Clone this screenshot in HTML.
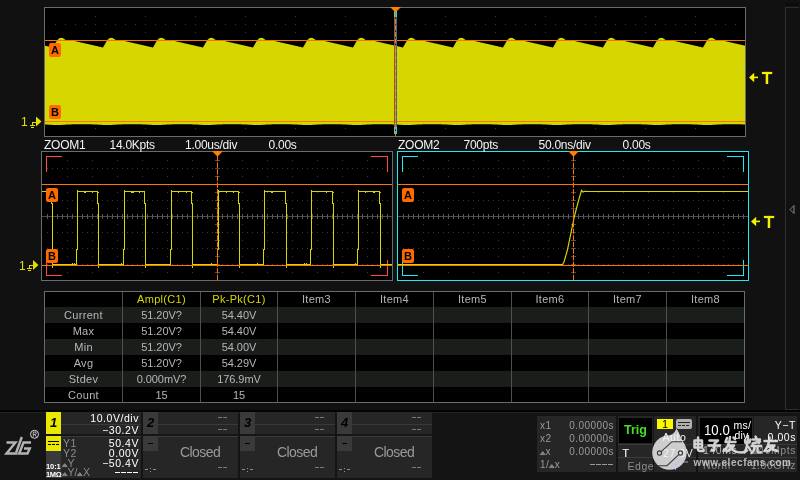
<!DOCTYPE html>
<html><head><meta charset="utf-8"><title>Scope</title>
<style>
html,body{margin:0;padding:0;}
body{width:800px;height:480px;background:#111111;overflow:hidden;position:relative;font-family:"Liberation Sans",sans-serif;}
#root{position:absolute;left:0;top:0;width:800px;height:480px;will-change:transform;}
.abs{position:absolute;}
.t12{position:absolute;font-size:12px;line-height:12px;color:#f4f4f4;white-space:nowrap;letter-spacing:-0.25px;}
.lab{position:absolute;width:12px;height:14px;background:#ff6a00;border-radius:2px;color:#000;font-size:11px;font-weight:bold;line-height:14px;text-align:center;}
svg{position:absolute;left:0;top:0;overflow:visible;}
.cell{position:absolute;font-size:11px;letter-spacing:0.3px;line-height:16px;height:16px;color:#b6b6b6;text-align:center;white-space:nowrap;}
.w{position:absolute;font-size:10.5px;line-height:10px;color:#fff;white-space:nowrap;letter-spacing:0.55px;}
.g{color:#8c8c8c;}
.x{font-size:10px;letter-spacing:0.45px;color:#9a9a9a;}
svg.tri{position:static;display:inline-block;vertical-align:0;overflow:visible;}
</style></head><body><div id="root">

<svg width="800" height="480" viewBox="0 0 800 480" shape-rendering="crispEdges">
<rect x="44.5" y="7.5" width="701" height="129" fill="#000" stroke="#6b6b6b" stroke-width="1"/>
<g stroke="#3c3c3c" stroke-width="1" fill="none"><path d="M95.5,16 V136" stroke-dasharray="1 7"/><path d="M145.5,16 V136" stroke-dasharray="1 7"/><path d="M195.5,16 V136" stroke-dasharray="1 7"/><path d="M245.5,16 V136" stroke-dasharray="1 7"/><path d="M295.5,16 V136" stroke-dasharray="1 7"/><path d="M345.5,16 V136" stroke-dasharray="1 7"/><path d="M395.5,16 V136" stroke-dasharray="1 7"/><path d="M445.5,16 V136" stroke-dasharray="1 7"/><path d="M495.5,16 V136" stroke-dasharray="1 7"/><path d="M545.5,16 V136" stroke-dasharray="1 7"/><path d="M595.5,16 V136" stroke-dasharray="1 7"/><path d="M645.5,16 V136" stroke-dasharray="1 7"/><path d="M695.5,16 V136" stroke-dasharray="1 7"/><path d="M55,24.5 H745" stroke-dasharray="1 9"/><path d="M55,40.5 H745" stroke-dasharray="1 9"/><path d="M55,56.5 H745" stroke-dasharray="1 9"/><path d="M55,72.5 H745" stroke-dasharray="1 9"/><path d="M55,88.5 H745" stroke-dasharray="1 9"/><path d="M55,104.5 H745" stroke-dasharray="1 9"/><path d="M55,120.5 H745" stroke-dasharray="1 9"/></g>
<path d="M45,45.7 L45.5,45.8 L46,45.9 L46.5,46.0 L47,46.1 L47.5,46.2 L48,46.4 L48.5,46.5 L49,46.6 L49.5,46.7 L50,46.8 L50.5,46.9 L51,47.0 L51.5,47.2 L52,47.3 L52.5,47.4 L53,47.5 L53.5,46.6 L54,45.8 L54.5,44.9 L55,44.0 L55.5,43.1 L56,42.2 L56.5,41.4 L57,40.5 L57.5,40.0 L58,39.5 L58.5,39.0 L59,38.6 L59.5,38.3 L60,38.0 L60.5,37.9 L61,37.8 L61.5,37.8 L62,37.9 L62.5,38.1 L63,38.3 L63.5,38.5 L64,38.8 L64.5,39.2 L65,39.5 L65.5,39.9 L66,40.3 L66.5,40.3 L67,40.4 L67.5,40.4 L68,40.5 L68.5,40.5 L69,40.6 L69.5,40.6 L70,40.7 L70.5,40.7 L71,40.7 L71.5,40.8 L72,40.8 L72.5,40.9 L73,40.9 L73.5,41.0 L74,41.0 L74.5,41.1 L75,41.1 L75.5,41.2 L76,41.3 L76.5,41.4 L77,41.6 L77.5,41.7 L78,41.8 L78.5,41.9 L79,42.0 L79.5,42.1 L80,42.2 L80.5,42.4 L81,42.5 L81.5,42.6 L82,42.7 L82.5,42.8 L83,42.9 L83.5,43.0 L84,43.2 L84.5,43.3 L85,43.4 L85.5,43.5 L86,43.6 L86.5,43.7 L87,43.8 L87.5,44.0 L88,44.1 L88.5,44.2 L89,44.3 L89.5,44.4 L90,44.5 L90.5,44.6 L91,44.8 L91.5,44.9 L92,45.0 L92.5,45.1 L93,45.2 L93.5,45.3 L94,45.4 L94.5,45.6 L95,45.7 L95.5,45.8 L96,45.9 L96.5,46.0 L97,46.1 L97.5,46.2 L98,46.4 L98.5,46.5 L99,46.6 L99.5,46.7 L100,46.8 L100.5,46.9 L101,47.0 L101.5,47.2 L102,47.3 L102.5,47.4 L103,47.5 L103.5,46.6 L104,45.8 L104.5,44.9 L105,44.0 L105.5,43.1 L106,42.2 L106.5,41.4 L107,40.5 L107.5,40.0 L108,39.5 L108.5,39.0 L109,38.6 L109.5,38.3 L110,38.0 L110.5,37.9 L111,37.8 L111.5,37.8 L112,37.9 L112.5,38.1 L113,38.3 L113.5,38.5 L114,38.8 L114.5,39.2 L115,39.5 L115.5,39.9 L116,40.3 L116.5,40.3 L117,40.4 L117.5,40.4 L118,40.5 L118.5,40.5 L119,40.6 L119.5,40.6 L120,40.7 L120.5,40.7 L121,40.7 L121.5,40.8 L122,40.8 L122.5,40.9 L123,40.9 L123.5,41.0 L124,41.0 L124.5,41.1 L125,41.1 L125.5,41.2 L126,41.3 L126.5,41.4 L127,41.6 L127.5,41.7 L128,41.8 L128.5,41.9 L129,42.0 L129.5,42.1 L130,42.2 L130.5,42.4 L131,42.5 L131.5,42.6 L132,42.7 L132.5,42.8 L133,42.9 L133.5,43.0 L134,43.2 L134.5,43.3 L135,43.4 L135.5,43.5 L136,43.6 L136.5,43.7 L137,43.8 L137.5,44.0 L138,44.1 L138.5,44.2 L139,44.3 L139.5,44.4 L140,44.5 L140.5,44.6 L141,44.8 L141.5,44.9 L142,45.0 L142.5,45.1 L143,45.2 L143.5,45.3 L144,45.4 L144.5,45.6 L145,45.7 L145.5,45.8 L146,45.9 L146.5,46.0 L147,46.1 L147.5,46.2 L148,46.4 L148.5,46.5 L149,46.6 L149.5,46.7 L150,46.8 L150.5,46.9 L151,47.0 L151.5,47.2 L152,47.3 L152.5,47.4 L153,47.5 L153.5,46.6 L154,45.8 L154.5,44.9 L155,44.0 L155.5,43.1 L156,42.2 L156.5,41.4 L157,40.5 L157.5,40.0 L158,39.5 L158.5,39.0 L159,38.6 L159.5,38.3 L160,38.0 L160.5,37.9 L161,37.8 L161.5,37.8 L162,37.9 L162.5,38.1 L163,38.3 L163.5,38.5 L164,38.8 L164.5,39.2 L165,39.5 L165.5,39.9 L166,40.3 L166.5,40.3 L167,40.4 L167.5,40.4 L168,40.5 L168.5,40.5 L169,40.6 L169.5,40.6 L170,40.7 L170.5,40.7 L171,40.7 L171.5,40.8 L172,40.8 L172.5,40.9 L173,40.9 L173.5,41.0 L174,41.0 L174.5,41.1 L175,41.1 L175.5,41.2 L176,41.3 L176.5,41.4 L177,41.6 L177.5,41.7 L178,41.8 L178.5,41.9 L179,42.0 L179.5,42.1 L180,42.2 L180.5,42.4 L181,42.5 L181.5,42.6 L182,42.7 L182.5,42.8 L183,42.9 L183.5,43.0 L184,43.2 L184.5,43.3 L185,43.4 L185.5,43.5 L186,43.6 L186.5,43.7 L187,43.8 L187.5,44.0 L188,44.1 L188.5,44.2 L189,44.3 L189.5,44.4 L190,44.5 L190.5,44.6 L191,44.8 L191.5,44.9 L192,45.0 L192.5,45.1 L193,45.2 L193.5,45.3 L194,45.4 L194.5,45.6 L195,45.7 L195.5,45.8 L196,45.9 L196.5,46.0 L197,46.1 L197.5,46.2 L198,46.4 L198.5,46.5 L199,46.6 L199.5,46.7 L200,46.8 L200.5,46.9 L201,47.0 L201.5,47.2 L202,47.3 L202.5,47.4 L203,47.5 L203.5,46.6 L204,45.8 L204.5,44.9 L205,44.0 L205.5,43.1 L206,42.2 L206.5,41.4 L207,40.5 L207.5,40.0 L208,39.5 L208.5,39.0 L209,38.6 L209.5,38.3 L210,38.0 L210.5,37.9 L211,37.8 L211.5,37.8 L212,37.9 L212.5,38.1 L213,38.3 L213.5,38.5 L214,38.8 L214.5,39.2 L215,39.5 L215.5,39.9 L216,40.3 L216.5,40.3 L217,40.4 L217.5,40.4 L218,40.5 L218.5,40.5 L219,40.6 L219.5,40.6 L220,40.7 L220.5,40.7 L221,40.7 L221.5,40.8 L222,40.8 L222.5,40.9 L223,40.9 L223.5,41.0 L224,41.0 L224.5,41.1 L225,41.1 L225.5,41.2 L226,41.3 L226.5,41.4 L227,41.6 L227.5,41.7 L228,41.8 L228.5,41.9 L229,42.0 L229.5,42.1 L230,42.2 L230.5,42.4 L231,42.5 L231.5,42.6 L232,42.7 L232.5,42.8 L233,42.9 L233.5,43.0 L234,43.2 L234.5,43.3 L235,43.4 L235.5,43.5 L236,43.6 L236.5,43.7 L237,43.8 L237.5,44.0 L238,44.1 L238.5,44.2 L239,44.3 L239.5,44.4 L240,44.5 L240.5,44.6 L241,44.8 L241.5,44.9 L242,45.0 L242.5,45.1 L243,45.2 L243.5,45.3 L244,45.4 L244.5,45.6 L245,45.7 L245.5,45.8 L246,45.9 L246.5,46.0 L247,46.1 L247.5,46.2 L248,46.4 L248.5,46.5 L249,46.6 L249.5,46.7 L250,46.8 L250.5,46.9 L251,47.0 L251.5,47.2 L252,47.3 L252.5,47.4 L253,47.5 L253.5,46.6 L254,45.8 L254.5,44.9 L255,44.0 L255.5,43.1 L256,42.2 L256.5,41.4 L257,40.5 L257.5,40.0 L258,39.5 L258.5,39.0 L259,38.6 L259.5,38.3 L260,38.0 L260.5,37.9 L261,37.8 L261.5,37.8 L262,37.9 L262.5,38.1 L263,38.3 L263.5,38.5 L264,38.8 L264.5,39.2 L265,39.5 L265.5,39.9 L266,40.3 L266.5,40.3 L267,40.4 L267.5,40.4 L268,40.5 L268.5,40.5 L269,40.6 L269.5,40.6 L270,40.7 L270.5,40.7 L271,40.7 L271.5,40.8 L272,40.8 L272.5,40.9 L273,40.9 L273.5,41.0 L274,41.0 L274.5,41.1 L275,41.1 L275.5,41.2 L276,41.3 L276.5,41.4 L277,41.6 L277.5,41.7 L278,41.8 L278.5,41.9 L279,42.0 L279.5,42.1 L280,42.2 L280.5,42.4 L281,42.5 L281.5,42.6 L282,42.7 L282.5,42.8 L283,42.9 L283.5,43.0 L284,43.2 L284.5,43.3 L285,43.4 L285.5,43.5 L286,43.6 L286.5,43.7 L287,43.8 L287.5,44.0 L288,44.1 L288.5,44.2 L289,44.3 L289.5,44.4 L290,44.5 L290.5,44.6 L291,44.8 L291.5,44.9 L292,45.0 L292.5,45.1 L293,45.2 L293.5,45.3 L294,45.4 L294.5,45.6 L295,45.7 L295.5,45.8 L296,45.9 L296.5,46.0 L297,46.1 L297.5,46.2 L298,46.4 L298.5,46.5 L299,46.6 L299.5,46.7 L300,46.8 L300.5,46.9 L301,47.0 L301.5,47.2 L302,47.3 L302.5,47.4 L303,47.5 L303.5,46.6 L304,45.8 L304.5,44.9 L305,44.0 L305.5,43.1 L306,42.2 L306.5,41.4 L307,40.5 L307.5,40.0 L308,39.5 L308.5,39.0 L309,38.6 L309.5,38.3 L310,38.0 L310.5,37.9 L311,37.8 L311.5,37.8 L312,37.9 L312.5,38.1 L313,38.3 L313.5,38.5 L314,38.8 L314.5,39.2 L315,39.5 L315.5,39.9 L316,40.3 L316.5,40.3 L317,40.4 L317.5,40.4 L318,40.5 L318.5,40.5 L319,40.6 L319.5,40.6 L320,40.7 L320.5,40.7 L321,40.7 L321.5,40.8 L322,40.8 L322.5,40.9 L323,40.9 L323.5,41.0 L324,41.0 L324.5,41.1 L325,41.1 L325.5,41.2 L326,41.3 L326.5,41.4 L327,41.6 L327.5,41.7 L328,41.8 L328.5,41.9 L329,42.0 L329.5,42.1 L330,42.2 L330.5,42.4 L331,42.5 L331.5,42.6 L332,42.7 L332.5,42.8 L333,42.9 L333.5,43.0 L334,43.2 L334.5,43.3 L335,43.4 L335.5,43.5 L336,43.6 L336.5,43.7 L337,43.8 L337.5,44.0 L338,44.1 L338.5,44.2 L339,44.3 L339.5,44.4 L340,44.5 L340.5,44.6 L341,44.8 L341.5,44.9 L342,45.0 L342.5,45.1 L343,45.2 L343.5,45.3 L344,45.4 L344.5,45.6 L345,45.7 L345.5,45.8 L346,45.9 L346.5,46.0 L347,46.1 L347.5,46.2 L348,46.4 L348.5,46.5 L349,46.6 L349.5,46.7 L350,46.8 L350.5,46.9 L351,47.0 L351.5,47.2 L352,47.3 L352.5,47.4 L353,47.5 L353.5,46.6 L354,45.8 L354.5,44.9 L355,44.0 L355.5,43.1 L356,42.2 L356.5,41.4 L357,40.5 L357.5,40.0 L358,39.5 L358.5,39.0 L359,38.6 L359.5,38.3 L360,38.0 L360.5,37.9 L361,37.8 L361.5,37.8 L362,37.9 L362.5,38.1 L363,38.3 L363.5,38.5 L364,38.8 L364.5,39.2 L365,39.5 L365.5,39.9 L366,40.3 L366.5,40.3 L367,40.4 L367.5,40.4 L368,40.5 L368.5,40.5 L369,40.6 L369.5,40.6 L370,40.7 L370.5,40.7 L371,40.7 L371.5,40.8 L372,40.8 L372.5,40.9 L373,40.9 L373.5,41.0 L374,41.0 L374.5,41.1 L375,41.1 L375.5,41.2 L376,41.3 L376.5,41.4 L377,41.6 L377.5,41.7 L378,41.8 L378.5,41.9 L379,42.0 L379.5,42.1 L380,42.2 L380.5,42.4 L381,42.5 L381.5,42.6 L382,42.7 L382.5,42.8 L383,42.9 L383.5,43.0 L384,43.2 L384.5,43.3 L385,43.4 L385.5,43.5 L386,43.6 L386.5,43.7 L387,43.8 L387.5,44.0 L388,44.1 L388.5,44.2 L389,44.3 L389.5,44.4 L390,44.5 L390.5,44.6 L391,44.8 L391.5,44.9 L392,45.0 L392.5,45.1 L393,45.2 L393.5,45.3 L394,45.4 L394.5,45.6 L395,45.7 L395.5,45.8 L396,45.9 L396.5,46.0 L397,46.1 L397.5,46.2 L398,46.4 L398.5,46.5 L399,46.6 L399.5,46.7 L400,46.8 L400.5,46.9 L401,47.0 L401.5,47.2 L402,47.3 L402.5,47.4 L403,47.5 L403.5,46.6 L404,45.8 L404.5,44.9 L405,44.0 L405.5,43.1 L406,42.2 L406.5,41.4 L407,40.5 L407.5,40.0 L408,39.5 L408.5,39.0 L409,38.6 L409.5,38.3 L410,38.0 L410.5,37.9 L411,37.8 L411.5,37.8 L412,37.9 L412.5,38.1 L413,38.3 L413.5,38.5 L414,38.8 L414.5,39.2 L415,39.5 L415.5,39.9 L416,40.3 L416.5,40.3 L417,40.4 L417.5,40.4 L418,40.5 L418.5,40.5 L419,40.6 L419.5,40.6 L420,40.7 L420.5,40.7 L421,40.7 L421.5,40.8 L422,40.8 L422.5,40.9 L423,40.9 L423.5,41.0 L424,41.0 L424.5,41.1 L425,41.1 L425.5,41.2 L426,41.3 L426.5,41.4 L427,41.6 L427.5,41.7 L428,41.8 L428.5,41.9 L429,42.0 L429.5,42.1 L430,42.2 L430.5,42.4 L431,42.5 L431.5,42.6 L432,42.7 L432.5,42.8 L433,42.9 L433.5,43.0 L434,43.2 L434.5,43.3 L435,43.4 L435.5,43.5 L436,43.6 L436.5,43.7 L437,43.8 L437.5,44.0 L438,44.1 L438.5,44.2 L439,44.3 L439.5,44.4 L440,44.5 L440.5,44.6 L441,44.8 L441.5,44.9 L442,45.0 L442.5,45.1 L443,45.2 L443.5,45.3 L444,45.4 L444.5,45.6 L445,45.7 L445.5,45.8 L446,45.9 L446.5,46.0 L447,46.1 L447.5,46.2 L448,46.4 L448.5,46.5 L449,46.6 L449.5,46.7 L450,46.8 L450.5,46.9 L451,47.0 L451.5,47.2 L452,47.3 L452.5,47.4 L453,47.5 L453.5,46.6 L454,45.8 L454.5,44.9 L455,44.0 L455.5,43.1 L456,42.2 L456.5,41.4 L457,40.5 L457.5,40.0 L458,39.5 L458.5,39.0 L459,38.6 L459.5,38.3 L460,38.0 L460.5,37.9 L461,37.8 L461.5,37.8 L462,37.9 L462.5,38.1 L463,38.3 L463.5,38.5 L464,38.8 L464.5,39.2 L465,39.5 L465.5,39.9 L466,40.3 L466.5,40.3 L467,40.4 L467.5,40.4 L468,40.5 L468.5,40.5 L469,40.6 L469.5,40.6 L470,40.7 L470.5,40.7 L471,40.7 L471.5,40.8 L472,40.8 L472.5,40.9 L473,40.9 L473.5,41.0 L474,41.0 L474.5,41.1 L475,41.1 L475.5,41.2 L476,41.3 L476.5,41.4 L477,41.6 L477.5,41.7 L478,41.8 L478.5,41.9 L479,42.0 L479.5,42.1 L480,42.2 L480.5,42.4 L481,42.5 L481.5,42.6 L482,42.7 L482.5,42.8 L483,42.9 L483.5,43.0 L484,43.2 L484.5,43.3 L485,43.4 L485.5,43.5 L486,43.6 L486.5,43.7 L487,43.8 L487.5,44.0 L488,44.1 L488.5,44.2 L489,44.3 L489.5,44.4 L490,44.5 L490.5,44.6 L491,44.8 L491.5,44.9 L492,45.0 L492.5,45.1 L493,45.2 L493.5,45.3 L494,45.4 L494.5,45.6 L495,45.7 L495.5,45.8 L496,45.9 L496.5,46.0 L497,46.1 L497.5,46.2 L498,46.4 L498.5,46.5 L499,46.6 L499.5,46.7 L500,46.8 L500.5,46.9 L501,47.0 L501.5,47.2 L502,47.3 L502.5,47.4 L503,47.5 L503.5,46.6 L504,45.8 L504.5,44.9 L505,44.0 L505.5,43.1 L506,42.2 L506.5,41.4 L507,40.5 L507.5,40.0 L508,39.5 L508.5,39.0 L509,38.6 L509.5,38.3 L510,38.0 L510.5,37.9 L511,37.8 L511.5,37.8 L512,37.9 L512.5,38.1 L513,38.3 L513.5,38.5 L514,38.8 L514.5,39.2 L515,39.5 L515.5,39.9 L516,40.3 L516.5,40.3 L517,40.4 L517.5,40.4 L518,40.5 L518.5,40.5 L519,40.6 L519.5,40.6 L520,40.7 L520.5,40.7 L521,40.7 L521.5,40.8 L522,40.8 L522.5,40.9 L523,40.9 L523.5,41.0 L524,41.0 L524.5,41.1 L525,41.1 L525.5,41.2 L526,41.3 L526.5,41.4 L527,41.6 L527.5,41.7 L528,41.8 L528.5,41.9 L529,42.0 L529.5,42.1 L530,42.2 L530.5,42.4 L531,42.5 L531.5,42.6 L532,42.7 L532.5,42.8 L533,42.9 L533.5,43.0 L534,43.2 L534.5,43.3 L535,43.4 L535.5,43.5 L536,43.6 L536.5,43.7 L537,43.8 L537.5,44.0 L538,44.1 L538.5,44.2 L539,44.3 L539.5,44.4 L540,44.5 L540.5,44.6 L541,44.8 L541.5,44.9 L542,45.0 L542.5,45.1 L543,45.2 L543.5,45.3 L544,45.4 L544.5,45.6 L545,45.7 L545.5,45.8 L546,45.9 L546.5,46.0 L547,46.1 L547.5,46.2 L548,46.4 L548.5,46.5 L549,46.6 L549.5,46.7 L550,46.8 L550.5,46.9 L551,47.0 L551.5,47.2 L552,47.3 L552.5,47.4 L553,47.5 L553.5,46.6 L554,45.8 L554.5,44.9 L555,44.0 L555.5,43.1 L556,42.2 L556.5,41.4 L557,40.5 L557.5,40.0 L558,39.5 L558.5,39.0 L559,38.6 L559.5,38.3 L560,38.0 L560.5,37.9 L561,37.8 L561.5,37.8 L562,37.9 L562.5,38.1 L563,38.3 L563.5,38.5 L564,38.8 L564.5,39.2 L565,39.5 L565.5,39.9 L566,40.3 L566.5,40.3 L567,40.4 L567.5,40.4 L568,40.5 L568.5,40.5 L569,40.6 L569.5,40.6 L570,40.7 L570.5,40.7 L571,40.7 L571.5,40.8 L572,40.8 L572.5,40.9 L573,40.9 L573.5,41.0 L574,41.0 L574.5,41.1 L575,41.1 L575.5,41.2 L576,41.3 L576.5,41.4 L577,41.6 L577.5,41.7 L578,41.8 L578.5,41.9 L579,42.0 L579.5,42.1 L580,42.2 L580.5,42.4 L581,42.5 L581.5,42.6 L582,42.7 L582.5,42.8 L583,42.9 L583.5,43.0 L584,43.2 L584.5,43.3 L585,43.4 L585.5,43.5 L586,43.6 L586.5,43.7 L587,43.8 L587.5,44.0 L588,44.1 L588.5,44.2 L589,44.3 L589.5,44.4 L590,44.5 L590.5,44.6 L591,44.8 L591.5,44.9 L592,45.0 L592.5,45.1 L593,45.2 L593.5,45.3 L594,45.4 L594.5,45.6 L595,45.7 L595.5,45.8 L596,45.9 L596.5,46.0 L597,46.1 L597.5,46.2 L598,46.4 L598.5,46.5 L599,46.6 L599.5,46.7 L600,46.8 L600.5,46.9 L601,47.0 L601.5,47.2 L602,47.3 L602.5,47.4 L603,47.5 L603.5,46.6 L604,45.8 L604.5,44.9 L605,44.0 L605.5,43.1 L606,42.2 L606.5,41.4 L607,40.5 L607.5,40.0 L608,39.5 L608.5,39.0 L609,38.6 L609.5,38.3 L610,38.0 L610.5,37.9 L611,37.8 L611.5,37.8 L612,37.9 L612.5,38.1 L613,38.3 L613.5,38.5 L614,38.8 L614.5,39.2 L615,39.5 L615.5,39.9 L616,40.3 L616.5,40.3 L617,40.4 L617.5,40.4 L618,40.5 L618.5,40.5 L619,40.6 L619.5,40.6 L620,40.7 L620.5,40.7 L621,40.7 L621.5,40.8 L622,40.8 L622.5,40.9 L623,40.9 L623.5,41.0 L624,41.0 L624.5,41.1 L625,41.1 L625.5,41.2 L626,41.3 L626.5,41.4 L627,41.6 L627.5,41.7 L628,41.8 L628.5,41.9 L629,42.0 L629.5,42.1 L630,42.2 L630.5,42.4 L631,42.5 L631.5,42.6 L632,42.7 L632.5,42.8 L633,42.9 L633.5,43.0 L634,43.2 L634.5,43.3 L635,43.4 L635.5,43.5 L636,43.6 L636.5,43.7 L637,43.8 L637.5,44.0 L638,44.1 L638.5,44.2 L639,44.3 L639.5,44.4 L640,44.5 L640.5,44.6 L641,44.8 L641.5,44.9 L642,45.0 L642.5,45.1 L643,45.2 L643.5,45.3 L644,45.4 L644.5,45.6 L645,45.7 L645.5,45.8 L646,45.9 L646.5,46.0 L647,46.1 L647.5,46.2 L648,46.4 L648.5,46.5 L649,46.6 L649.5,46.7 L650,46.8 L650.5,46.9 L651,47.0 L651.5,47.2 L652,47.3 L652.5,47.4 L653,47.5 L653.5,46.6 L654,45.8 L654.5,44.9 L655,44.0 L655.5,43.1 L656,42.2 L656.5,41.4 L657,40.5 L657.5,40.0 L658,39.5 L658.5,39.0 L659,38.6 L659.5,38.3 L660,38.0 L660.5,37.9 L661,37.8 L661.5,37.8 L662,37.9 L662.5,38.1 L663,38.3 L663.5,38.5 L664,38.8 L664.5,39.2 L665,39.5 L665.5,39.9 L666,40.3 L666.5,40.3 L667,40.4 L667.5,40.4 L668,40.5 L668.5,40.5 L669,40.6 L669.5,40.6 L670,40.7 L670.5,40.7 L671,40.7 L671.5,40.8 L672,40.8 L672.5,40.9 L673,40.9 L673.5,41.0 L674,41.0 L674.5,41.1 L675,41.1 L675.5,41.2 L676,41.3 L676.5,41.4 L677,41.6 L677.5,41.7 L678,41.8 L678.5,41.9 L679,42.0 L679.5,42.1 L680,42.2 L680.5,42.4 L681,42.5 L681.5,42.6 L682,42.7 L682.5,42.8 L683,42.9 L683.5,43.0 L684,43.2 L684.5,43.3 L685,43.4 L685.5,43.5 L686,43.6 L686.5,43.7 L687,43.8 L687.5,44.0 L688,44.1 L688.5,44.2 L689,44.3 L689.5,44.4 L690,44.5 L690.5,44.6 L691,44.8 L691.5,44.9 L692,45.0 L692.5,45.1 L693,45.2 L693.5,45.3 L694,45.4 L694.5,45.6 L695,45.7 L695.5,45.8 L696,45.9 L696.5,46.0 L697,46.1 L697.5,46.2 L698,46.4 L698.5,46.5 L699,46.6 L699.5,46.7 L700,46.8 L700.5,46.9 L701,47.0 L701.5,47.2 L702,47.3 L702.5,47.4 L703,47.5 L703.5,46.6 L704,45.8 L704.5,44.9 L705,44.0 L705.5,43.1 L706,42.2 L706.5,41.4 L707,40.5 L707.5,40.0 L708,39.5 L708.5,39.0 L709,38.6 L709.5,38.3 L710,38.0 L710.5,37.9 L711,37.8 L711.5,37.8 L712,37.9 L712.5,38.1 L713,38.3 L713.5,38.5 L714,38.8 L714.5,39.2 L715,39.5 L715.5,39.9 L716,40.3 L716.5,40.3 L717,40.4 L717.5,40.4 L718,40.5 L718.5,40.5 L719,40.6 L719.5,40.6 L720,40.7 L720.5,40.7 L721,40.7 L721.5,40.8 L722,40.8 L722.5,40.9 L723,40.9 L723.5,41.0 L724,41.0 L724.5,41.1 L725,41.1 L725.5,41.2 L726,41.3 L726.5,41.4 L727,41.6 L727.5,41.7 L728,41.8 L728.5,41.9 L729,42.0 L729.5,42.1 L730,42.2 L730.5,42.4 L731,42.5 L731.5,42.6 L732,42.7 L732.5,42.8 L733,42.9 L733.5,43.0 L734,43.2 L734.5,43.3 L735,43.4 L735.5,43.5 L736,43.6 L736.5,43.7 L737,43.8 L737.5,44.0 L738,44.1 L738.5,44.2 L739,44.3 L739.5,44.4 L740,44.5 L740.5,44.6 L741,44.8 L741.5,44.9 L742,45.0 L742.5,45.1 L743,45.2 L743.5,45.3 L744,45.4 L744.5,45.6 L745,45.7 L745,124.4 L743,124.4 L741,124.3 L739,124.3 L737,124.3 L735,124.3 L733,124.3 L731,124.3 L729,124.3 L727,124.3 L725,124.3 L723,124.3 L721,124.4 L719,124.4 L717,124.5 L715,124.7 L713,124.8 L711,125.0 L709,125.1 L707,125.1 L705,125.1 L703,125.0 L701,124.8 L699,124.7 L697,124.5 L695,124.4 L693,124.4 L691,124.3 L689,124.3 L687,124.3 L685,124.3 L683,124.3 L681,124.3 L679,124.3 L677,124.3 L675,124.3 L673,124.3 L671,124.4 L669,124.4 L667,124.5 L665,124.7 L663,124.8 L661,125.0 L659,125.1 L657,125.1 L655,125.1 L653,125.0 L651,124.8 L649,124.7 L647,124.5 L645,124.4 L643,124.4 L641,124.3 L639,124.3 L637,124.3 L635,124.3 L633,124.3 L631,124.3 L629,124.3 L627,124.3 L625,124.3 L623,124.3 L621,124.4 L619,124.4 L617,124.5 L615,124.7 L613,124.8 L611,125.0 L609,125.1 L607,125.1 L605,125.1 L603,125.0 L601,124.8 L599,124.7 L597,124.5 L595,124.4 L593,124.4 L591,124.3 L589,124.3 L587,124.3 L585,124.3 L583,124.3 L581,124.3 L579,124.3 L577,124.3 L575,124.3 L573,124.3 L571,124.4 L569,124.4 L567,124.5 L565,124.7 L563,124.8 L561,125.0 L559,125.1 L557,125.1 L555,125.1 L553,125.0 L551,124.8 L549,124.7 L547,124.5 L545,124.4 L543,124.4 L541,124.3 L539,124.3 L537,124.3 L535,124.3 L533,124.3 L531,124.3 L529,124.3 L527,124.3 L525,124.3 L523,124.3 L521,124.4 L519,124.4 L517,124.5 L515,124.7 L513,124.8 L511,125.0 L509,125.1 L507,125.1 L505,125.1 L503,125.0 L501,124.8 L499,124.7 L497,124.5 L495,124.4 L493,124.4 L491,124.3 L489,124.3 L487,124.3 L485,124.3 L483,124.3 L481,124.3 L479,124.3 L477,124.3 L475,124.3 L473,124.3 L471,124.4 L469,124.4 L467,124.5 L465,124.7 L463,124.8 L461,125.0 L459,125.1 L457,125.1 L455,125.1 L453,125.0 L451,124.8 L449,124.7 L447,124.5 L445,124.4 L443,124.4 L441,124.3 L439,124.3 L437,124.3 L435,124.3 L433,124.3 L431,124.3 L429,124.3 L427,124.3 L425,124.3 L423,124.3 L421,124.4 L419,124.4 L417,124.5 L415,124.7 L413,124.8 L411,125.0 L409,125.1 L407,125.1 L405,125.1 L403,125.0 L401,124.8 L399,124.7 L397,124.5 L395,124.4 L393,124.4 L391,124.3 L389,124.3 L387,124.3 L385,124.3 L383,124.3 L381,124.3 L379,124.3 L377,124.3 L375,124.3 L373,124.3 L371,124.4 L369,124.4 L367,124.5 L365,124.7 L363,124.8 L361,125.0 L359,125.1 L357,125.1 L355,125.1 L353,125.0 L351,124.8 L349,124.7 L347,124.5 L345,124.4 L343,124.4 L341,124.3 L339,124.3 L337,124.3 L335,124.3 L333,124.3 L331,124.3 L329,124.3 L327,124.3 L325,124.3 L323,124.3 L321,124.4 L319,124.4 L317,124.5 L315,124.7 L313,124.8 L311,125.0 L309,125.1 L307,125.1 L305,125.1 L303,125.0 L301,124.8 L299,124.7 L297,124.5 L295,124.4 L293,124.4 L291,124.3 L289,124.3 L287,124.3 L285,124.3 L283,124.3 L281,124.3 L279,124.3 L277,124.3 L275,124.3 L273,124.3 L271,124.4 L269,124.4 L267,124.5 L265,124.7 L263,124.8 L261,125.0 L259,125.1 L257,125.1 L255,125.1 L253,125.0 L251,124.8 L249,124.7 L247,124.5 L245,124.4 L243,124.4 L241,124.3 L239,124.3 L237,124.3 L235,124.3 L233,124.3 L231,124.3 L229,124.3 L227,124.3 L225,124.3 L223,124.3 L221,124.4 L219,124.4 L217,124.5 L215,124.7 L213,124.8 L211,125.0 L209,125.1 L207,125.1 L205,125.1 L203,125.0 L201,124.8 L199,124.7 L197,124.5 L195,124.4 L193,124.4 L191,124.3 L189,124.3 L187,124.3 L185,124.3 L183,124.3 L181,124.3 L179,124.3 L177,124.3 L175,124.3 L173,124.3 L171,124.4 L169,124.4 L167,124.5 L165,124.7 L163,124.8 L161,125.0 L159,125.1 L157,125.1 L155,125.1 L153,125.0 L151,124.8 L149,124.7 L147,124.5 L145,124.4 L143,124.4 L141,124.3 L139,124.3 L137,124.3 L135,124.3 L133,124.3 L131,124.3 L129,124.3 L127,124.3 L125,124.3 L123,124.3 L121,124.4 L119,124.4 L117,124.5 L115,124.7 L113,124.8 L111,125.0 L109,125.1 L107,125.1 L105,125.1 L103,125.0 L101,124.8 L99,124.7 L97,124.5 L95,124.4 L93,124.4 L91,124.3 L89,124.3 L87,124.3 L85,124.3 L83,124.3 L81,124.3 L79,124.3 L77,124.3 L75,124.3 L73,124.3 L71,124.4 L69,124.4 L67,124.5 L65,124.7 L63,124.8 L61,125.0 L59,125.1 L57,125.1 L55,125.1 L53,125.0 L51,124.8 L49,124.7 L47,124.5 L45,124.4 Z" fill="#d6d600" shape-rendering="geometricPrecision"/>
<rect x="45" y="40" width="700" height="1" fill="#ff7400"/>
<rect x="45" y="121" width="700" height="1" fill="#ff7400"/>
<rect x="394" y="17" width="1" height="110" fill="#5d6475"/>
<rect x="396" y="17" width="1" height="110" fill="#5d6475"/>
<rect x="394" y="10" width="1" height="7" fill="#20e0e8"/><rect x="396" y="10" width="1" height="7" fill="#20e0e8"/>
<rect x="394" y="127" width="1" height="7" fill="#20e0e8"/><rect x="396" y="127" width="1" height="7" fill="#20e0e8"/><rect x="394" y="133" width="3" height="1" fill="#20e0e8"/>
<path d="M395.5,12 V137" stroke="#ff7400" stroke-dasharray="5.3 1.3" fill="none" shape-rendering="geometricPrecision"/>
<path d="M390,7 L401,7 L395.5,12.5 Z" fill="#ff8000" shape-rendering="geometricPrecision"/>
<rect x="41.5" y="151.5" width="351" height="129" fill="#000" stroke="#6b6b6b" stroke-width="1"/>
<g stroke="#3a3a3a" stroke-width="1" fill="none"><path d="M67.5,160 V280" stroke-dasharray="1 7"/><path d="M92.5,160 V280" stroke-dasharray="1 7"/><path d="M117.5,160 V280" stroke-dasharray="1 7"/><path d="M142.5,160 V280" stroke-dasharray="1 7"/><path d="M167.5,160 V280" stroke-dasharray="1 7"/><path d="M192.5,160 V280" stroke-dasharray="1 7"/><path d="M217.5,160 V280" stroke-dasharray="1 7"/><path d="M242.5,160 V280" stroke-dasharray="1 7"/><path d="M267.5,160 V280" stroke-dasharray="1 7"/><path d="M292.5,160 V280" stroke-dasharray="1 7"/><path d="M317.5,160 V280" stroke-dasharray="1 7"/><path d="M342.5,160 V280" stroke-dasharray="1 7"/><path d="M367.5,160 V280" stroke-dasharray="1 7"/><path d="M47,168.5 H392" stroke-dasharray="1 4"/><path d="M47,184.5 H392" stroke-dasharray="1 4"/><path d="M47,200.5 H392" stroke-dasharray="1 4"/><path d="M47,232.5 H392" stroke-dasharray="1 4"/><path d="M47,248.5 H392" stroke-dasharray="1 4"/><path d="M47,264.5 H392" stroke-dasharray="1 4"/></g>
<path d="M217.5,160 V280" stroke="#4a4a4a" stroke-width="5" stroke-dasharray="1 7" fill="none"/>
<rect x="42" y="216" width="350" height="1" fill="#4a4a4a"/>
<path d="M47,216.5 H392" stroke="#5a5a5a" stroke-width="5" stroke-dasharray="1 4" fill="none"/>
<path d="M46.5,172 V156.5 H62" fill="none" stroke="#ff4848"/>
<path d="M371,156.5 H387.5 V172" fill="none" stroke="#ff4848"/>
<path d="M46.5,260 V275.5 H62" fill="none" stroke="#ff4848"/>
<path d="M371,275.5 H387.5 V260" fill="none" stroke="#ff4848"/>
<rect x="397.5" y="151.5" width="351" height="129" fill="#000" stroke="#20e8f0" stroke-width="1"/>
<g stroke="#3a3a3a" stroke-width="1" fill="none"><path d="M423.5,160 V280" stroke-dasharray="1 7"/><path d="M448.5,160 V280" stroke-dasharray="1 7"/><path d="M473.5,160 V280" stroke-dasharray="1 7"/><path d="M498.5,160 V280" stroke-dasharray="1 7"/><path d="M523.5,160 V280" stroke-dasharray="1 7"/><path d="M548.5,160 V280" stroke-dasharray="1 7"/><path d="M573.5,160 V280" stroke-dasharray="1 7"/><path d="M598.5,160 V280" stroke-dasharray="1 7"/><path d="M623.5,160 V280" stroke-dasharray="1 7"/><path d="M648.5,160 V280" stroke-dasharray="1 7"/><path d="M673.5,160 V280" stroke-dasharray="1 7"/><path d="M698.5,160 V280" stroke-dasharray="1 7"/><path d="M723.5,160 V280" stroke-dasharray="1 7"/><path d="M403,168.5 H748" stroke-dasharray="1 4"/><path d="M403,184.5 H748" stroke-dasharray="1 4"/><path d="M403,200.5 H748" stroke-dasharray="1 4"/><path d="M403,232.5 H748" stroke-dasharray="1 4"/><path d="M403,248.5 H748" stroke-dasharray="1 4"/><path d="M403,264.5 H748" stroke-dasharray="1 4"/></g>
<path d="M573.5,160 V280" stroke="#4a4a4a" stroke-width="5" stroke-dasharray="1 7" fill="none"/>
<rect x="398" y="216" width="350" height="1" fill="#4a4a4a"/>
<path d="M403,216.5 H748" stroke="#5a5a5a" stroke-width="5" stroke-dasharray="1 4" fill="none"/>
<path d="M402.5,172 V156.5 H418" fill="none" stroke="#20e8f0"/>
<path d="M727,156.5 H743.5 V172" fill="none" stroke="#20e8f0"/>
<path d="M402.5,260 V275.5 H418" fill="none" stroke="#20e8f0"/>
<path d="M727,275.5 H743.5 V260" fill="none" stroke="#20e8f0"/>
<g fill="#d6d600"><rect x="42" y="191" width="10" height="1"/><rect x="51" y="191" width="1" height="13"/><rect x="52" y="203" width="1" height="65"/><rect x="52" y="264" width="25" height="1"/><rect x="76" y="249" width="1" height="16"/><rect x="77" y="190" width="1" height="60"/><rect x="77" y="191" width="21" height="1"/><rect x="97" y="191" width="1" height="13"/><rect x="98" y="203" width="1" height="65"/><rect x="98" y="264" width="26" height="1"/><rect x="123" y="249" width="1" height="16"/><rect x="124" y="190" width="1" height="60"/><rect x="124" y="191" width="21" height="1"/><rect x="144" y="191" width="1" height="13"/><rect x="145" y="203" width="1" height="65"/><rect x="145" y="264" width="26" height="1"/><rect x="170" y="249" width="1" height="16"/><rect x="171" y="190" width="1" height="60"/><rect x="171" y="191" width="21" height="1"/><rect x="191" y="191" width="1" height="13"/><rect x="192" y="203" width="1" height="65"/><rect x="192" y="264" width="26" height="1"/><rect x="217" y="249" width="1" height="16"/><rect x="218" y="190" width="1" height="60"/><rect x="218" y="191" width="21" height="1"/><rect x="238" y="191" width="1" height="13"/><rect x="239" y="203" width="1" height="65"/><rect x="239" y="264" width="25" height="1"/><rect x="263" y="249" width="1" height="16"/><rect x="264" y="190" width="1" height="60"/><rect x="264" y="191" width="22" height="1"/><rect x="285" y="191" width="1" height="13"/><rect x="286" y="203" width="1" height="65"/><rect x="286" y="264" width="25" height="1"/><rect x="310" y="249" width="1" height="16"/><rect x="311" y="190" width="1" height="60"/><rect x="311" y="191" width="22" height="1"/><rect x="332" y="191" width="1" height="13"/><rect x="333" y="203" width="1" height="65"/><rect x="333" y="264" width="25" height="1"/><rect x="357" y="249" width="1" height="16"/><rect x="358" y="190" width="1" height="60"/><rect x="358" y="191" width="22" height="1"/><rect x="379" y="191" width="1" height="13"/><rect x="380" y="203" width="1" height="65"/><rect x="380" y="264" width="12" height="1"/><rect x="84" y="192" width="1" height="1"/><rect x="85" y="192" width="1" height="1"/><rect x="92" y="192" width="1" height="1"/><rect x="98" y="192" width="1" height="1"/><rect x="72" y="263" width="1" height="1"/><rect x="74" y="263" width="1" height="1"/><rect x="131" y="192" width="1" height="1"/><rect x="132" y="192" width="2" height="1"/><rect x="139" y="192" width="1" height="1"/><rect x="121" y="263" width="1" height="1"/><rect x="178" y="192" width="1" height="1"/><rect x="186" y="192" width="1" height="1"/><rect x="192" y="192" width="1" height="1"/><rect x="226" y="192" width="1" height="1"/><rect x="233" y="192" width="1" height="1"/><rect x="239" y="192" width="1" height="1"/><rect x="211" y="263" width="1" height="1"/><rect x="271" y="192" width="2" height="1"/><rect x="272" y="192" width="1" height="1"/><rect x="257" y="263" width="1" height="1"/><rect x="326" y="192" width="1" height="1"/><rect x="332" y="192" width="2" height="1"/><rect x="304" y="263" width="1" height="1"/><rect x="306" y="263" width="1" height="1"/><rect x="365" y="192" width="1" height="1"/><rect x="373" y="192" width="2" height="1"/><rect x="379" y="192" width="2" height="1"/><rect x="355" y="263" width="1" height="1"/></g>
<rect x="42" y="184" width="350" height="1" fill="#ff7400"/>
<rect x="42" y="265" width="350" height="1" fill="#ff7400"/>
<rect x="398" y="184" width="350" height="1" fill="#ff7400"/>
<rect x="398" y="265" width="350" height="1" fill="#ff7400"/>
<path d="M398,264.5 L562.5,264.5 L564,262 L567.4,250 L574.5,216 L578.7,200 L581.5,190.3 L583,192 L585,191.3 L588,191.5 L748,191.5" fill="none" stroke="#d6d600" stroke-width="1.15" shape-rendering="geometricPrecision"/>
<path d="M217.5,156 V281" stroke="#ff7400" stroke-dasharray="5.3 1.3" fill="none" shape-rendering="geometricPrecision"/>
<path d="M212,151 L223,151 L217.5,156.8 Z" fill="#ff8000" shape-rendering="geometricPrecision"/>
<path d="M573.5,156 V281" stroke="#ff7400" stroke-dasharray="5.3 1.3" fill="none" shape-rendering="geometricPrecision"/>
<path d="M568,151 L579,151 L573.5,156.8 Z" fill="#ff8000" shape-rendering="geometricPrecision"/>
<path d="M749,77.5 L754.2,72.8 L754.2,82.2 Z" fill="#f2f200" shape-rendering="geometricPrecision"/>
<rect x="754" y="76.6" width="4" height="1.6" fill="#f2f200" shape-rendering="geometricPrecision"/>
<rect x="761.9" y="71.9" width="10.3" height="2.2" fill="#f2f200" shape-rendering="geometricPrecision"/>
<rect x="765.7" y="71.9" width="2.5" height="12.1" fill="#f2f200" shape-rendering="geometricPrecision"/>
<path d="M751,221.5 L756.2,216.8 L756.2,226.2 Z" fill="#f2f200" shape-rendering="geometricPrecision"/>
<rect x="756" y="220.6" width="4" height="1.6" fill="#f2f200" shape-rendering="geometricPrecision"/>
<rect x="763.9" y="215.9" width="10.3" height="2.2" fill="#f2f200" shape-rendering="geometricPrecision"/>
<rect x="767.7" y="215.9" width="2.5" height="12.1" fill="#f2f200" shape-rendering="geometricPrecision"/>
<path d="M36,116.5 L41.5,121.5 L36,126.5 Z" fill="#e0e000" shape-rendering="geometricPrecision"/>
<path d="M36,122.0 H32.5 V125.0 M29.5,125.0 H35 M30.5,127.0 H34" fill="none" stroke="#e0e000" stroke-width="1"/>
<path d="M33,260 L38.5,265 L33,270 Z" fill="#e0e000" shape-rendering="geometricPrecision"/>
<path d="M33,265.5 H29.5 V268.5 M26.5,268.5 H32 M27.5,270.5 H31" fill="none" stroke="#e0e000" stroke-width="1"/>
<path d="M799,7.5 H785.5 V409.5 H799" fill="none" stroke="#2e2e2e"/>
<rect x="785" y="3" width="14" height="3" fill="#0c0c0c"/>
<path d="M790,209.5 L794,205.5 V213.5 Z" fill="none" stroke="#8a8a8a" stroke-width="1" shape-rendering="geometricPrecision"/>
</svg>
<div class="lab" style="left:49px;top:43px;">A</div><div class="lab" style="left:49px;top:105px;">B</div>
<div class="lab" style="left:46px;top:188px;">A</div><div class="lab" style="left:46px;top:249px;">B</div>
<div class="lab" style="left:402px;top:188px;">A</div><div class="lab" style="left:402px;top:249px;">B</div>
<div class="abs" style="left:21px;top:116px;font-size:12px;line-height:12px;color:#e0e000;">1</div>
<div class="abs" style="left:19px;top:259.5px;font-size:12px;line-height:12px;color:#e0e000;">1</div>
<div class="t12" style="left:44px;top:138.5px;">ZOOM1</div>
<div class="t12" style="left:109.5px;top:138.5px;">14.0Kpts</div>
<div class="t12" style="left:185px;top:138.5px;">1.00us/div</div>
<div class="t12" style="left:268.5px;top:138.5px;">0.00s</div>
<div class="t12" style="left:398px;top:138.5px;">ZOOM2</div>
<div class="t12" style="left:463.5px;top:138.5px;">700pts</div>
<div class="t12" style="left:538.5px;top:138.5px;">50.0ns/div</div>
<div class="t12" style="left:622.5px;top:138.5px;">0.00s</div>
<div class="abs" style="left:44px;top:291px;width:701px;height:112px;box-sizing:border-box;border:1px solid #6b6b6b;background:#000;"></div>
<div class="abs" style="left:45px;top:307px;width:699px;height:16px;background:#191e1b;"></div>
<div class="abs" style="left:45px;top:339px;width:699px;height:16px;background:#191e1b;"></div>
<div class="abs" style="left:45px;top:371px;width:699px;height:16px;background:#191e1b;"></div>
<div class="abs" style="left:122px;top:292px;width:1px;height:110px;background:#4e4e4e;"></div>
<div class="abs" style="left:200px;top:292px;width:1px;height:110px;background:#4e4e4e;"></div>
<div class="abs" style="left:277px;top:292px;width:1px;height:110px;background:#4e4e4e;"></div>
<div class="abs" style="left:355px;top:292px;width:1px;height:110px;background:#4e4e4e;"></div>
<div class="abs" style="left:433px;top:292px;width:1px;height:110px;background:#4e4e4e;"></div>
<div class="abs" style="left:511px;top:292px;width:1px;height:110px;background:#4e4e4e;"></div>
<div class="abs" style="left:588px;top:292px;width:1px;height:110px;background:#4e4e4e;"></div>
<div class="abs" style="left:666px;top:292px;width:1px;height:110px;background:#4e4e4e;"></div>
<div class="cell" style="left:123px;top:291px;width:77px;color:#d6d600;">Ampl(C1)</div>
<div class="cell" style="left:201px;top:291px;width:76px;color:#d6d600;">Pk-Pk(C1)</div>
<div class="cell" style="left:278px;top:291px;width:77px;color:#b6b6b6;">Item3</div>
<div class="cell" style="left:356px;top:291px;width:77px;color:#b6b6b6;">Item4</div>
<div class="cell" style="left:434px;top:291px;width:77px;color:#b6b6b6;">Item5</div>
<div class="cell" style="left:512px;top:291px;width:76px;color:#b6b6b6;">Item6</div>
<div class="cell" style="left:589px;top:291px;width:77px;color:#b6b6b6;">Item7</div>
<div class="cell" style="left:667px;top:291px;width:77px;color:#b6b6b6;">Item8</div>
<div class="cell" style="left:45px;top:307px;width:77px;">Current</div>
<div class="cell" style="left:123px;top:307px;width:77px;letter-spacing:-0.05px;">51.20V?</div>
<div class="cell" style="left:201px;top:307px;width:76px;letter-spacing:-0.05px;">54.40V</div>
<div class="cell" style="left:45px;top:323px;width:77px;">Max</div>
<div class="cell" style="left:123px;top:323px;width:77px;letter-spacing:-0.05px;">51.20V?</div>
<div class="cell" style="left:201px;top:323px;width:76px;letter-spacing:-0.05px;">54.40V</div>
<div class="cell" style="left:45px;top:339px;width:77px;">Min</div>
<div class="cell" style="left:123px;top:339px;width:77px;letter-spacing:-0.05px;">51.20V?</div>
<div class="cell" style="left:201px;top:339px;width:76px;letter-spacing:-0.05px;">54.00V</div>
<div class="cell" style="left:45px;top:355px;width:77px;">Avg</div>
<div class="cell" style="left:123px;top:355px;width:77px;letter-spacing:-0.05px;">51.20V?</div>
<div class="cell" style="left:201px;top:355px;width:76px;letter-spacing:-0.05px;">54.29V</div>
<div class="cell" style="left:45px;top:371px;width:77px;">Stdev</div>
<div class="cell" style="left:123px;top:371px;width:77px;letter-spacing:-0.05px;">0.000mV?</div>
<div class="cell" style="left:201px;top:371px;width:76px;letter-spacing:-0.05px;">176.9mV</div>
<div class="cell" style="left:45px;top:387px;width:77px;">Count</div>
<div class="cell" style="left:123px;top:387px;width:77px;letter-spacing:-0.05px;">15</div>
<div class="cell" style="left:201px;top:387px;width:76px;letter-spacing:-0.05px;">15</div>
<div class="abs" style="left:0;top:410px;width:800px;height:2px;background:#030303;"></div>
<div class="abs" style="left:0;top:412px;width:800px;height:68px;background:#141414;"></div>
<div class="abs" style="left:0;top:412px;width:800px;height:1px;background:#222226;"></div>
<div class="abs" style="left:46px;top:412px;width:95px;height:66px;background:#262626;"></div>
<div class="abs" style="left:46px;top:412px;width:15px;height:22px;background:#e8e800;color:#000;font-weight:bold;font-style:italic;font-size:13px;line-height:22px;text-align:center;">1</div>
<div class="abs" style="left:46px;top:436px;width:15px;height:15px;background:#e8e800;"></div>
<div class="abs" style="left:48px;top:441px;width:11px;height:1px;background:#000;"></div>
<div class="abs" style="left:48px;top:444px;width:11px;height:1px;background:repeating-linear-gradient(90deg,#000 0 3px,transparent 3px 4px);"></div>
<div class="abs" style="left:46px;top:451px;width:15px;height:27px;background:#3a3a3a;"></div>
<div class="abs" style="left:61px;top:424px;width:80px;height:1px;background:#3a3a3a;"></div>
<div class="abs" style="left:46px;top:434px;width:95px;height:2px;background:#161616;"></div>
<div class="abs" style="left:61px;top:436px;width:80px;height:1px;background:#3a3a3a;"></div>
<div class="w" style="right:661px;top:413px;">10.0V/div</div>
<div class="w" style="right:661px;top:425px;">&minus;30.2V</div>
<div class="w g" style="left:63px;top:437.5px;">Y1</div>
<div class="w" style="right:661px;top:437.5px;">50.4V</div>
<div class="w g" style="left:63px;top:447.5px;">Y2</div>
<div class="w" style="right:661px;top:447.5px;">0.00V</div>
<div class="w g" style="left:62px;top:457.5px;"><svg class="tri" width="5.5" height="4" viewBox="0 0 5.5 4"><path d="M0.3,3.6 L2.75,0.6 L5.2,3.6 Z" fill="#7a7a7a" stroke="#a0a0a0" stroke-width="0.7"/></svg>Y</div>
<div class="w" style="right:661px;top:457.5px;">&minus;50.4V</div>
<div class="w g" style="left:62px;top:466.5px;letter-spacing:0;"><svg class="tri" width="5.5" height="4" viewBox="0 0 5.5 4"><path d="M0.3,3.6 L2.75,0.6 L5.2,3.6 Z" fill="#7a7a7a" stroke="#a0a0a0" stroke-width="0.7"/></svg>Y/<svg class="tri" width="5.5" height="4" viewBox="0 0 5.5 4"><path d="M0.3,3.6 L2.75,0.6 L5.2,3.6 Z" fill="#7a7a7a" stroke="#a0a0a0" stroke-width="0.7"/></svg>X</div>
<div class="abs" style="left:133.25px;top:471.8px;width:4.75px;height:1.5px;background:#fff;"></div><div class="abs" style="left:127.30px;top:471.8px;width:4.75px;height:1.5px;background:#fff;"></div><div class="abs" style="left:121.35px;top:471.8px;width:4.75px;height:1.5px;background:#fff;"></div><div class="abs" style="left:115.40px;top:471.8px;width:4.75px;height:1.5px;background:#fff;"></div>
<div class="w" style="left:46px;top:462px;font-size:7.5px;letter-spacing:-0.1px;font-weight:bold;">10:1</div>
<div class="w" style="left:46px;top:470px;font-size:7.5px;letter-spacing:-0.3px;font-weight:bold;">1M&#937;</div>
<div class="abs" style="left:143px;top:412px;width:95px;height:66px;background:#262626;"></div>
<div class="abs" style="left:143px;top:412px;width:15px;height:22px;background:#3a3a3a;color:#000;font-weight:bold;font-style:italic;font-size:13px;line-height:22px;text-align:center;">2</div>
<div class="abs" style="left:143px;top:436px;width:15px;height:15px;background:#3a3a3a;"></div>
<div class="abs" style="left:148px;top:443px;width:5px;height:1px;background:#000;"></div>
<div class="abs" style="left:158px;top:424px;width:80px;height:1px;background:#3a3a3a;"></div>
<div class="abs" style="left:143px;top:434px;width:95px;height:2px;background:#161616;"></div>
<div class="abs" style="left:158px;top:436px;width:80px;height:1px;background:#3a3a3a;"></div>
<div class="abs" style="left:180px;top:443.5px;font-size:14px;letter-spacing:-0.55px;line-height:16px;color:#9a9a9a;">Closed</div>
<div class="abs" style="left:218px;top:417px;width:3.5px;height:1px;background:#7a7a7a;"></div><div class="abs" style="left:223px;top:417px;width:3.5px;height:1px;background:#7a7a7a;"></div>
<div class="abs" style="left:218px;top:429px;width:3.5px;height:1px;background:#7a7a7a;"></div><div class="abs" style="left:223px;top:429px;width:3.5px;height:1px;background:#7a7a7a;"></div>
<div class="abs" style="left:218px;top:467px;width:3.5px;height:1px;background:#7a7a7a;"></div><div class="abs" style="left:223px;top:467px;width:3.5px;height:1px;background:#7a7a7a;"></div>
<div class="abs" style="left:145px;top:469px;width:3px;height:1px;background:#8c8c8c;"></div><div class="abs" style="left:153px;top:469px;width:3px;height:1px;background:#8c8c8c;"></div><div class="abs" style="left:150px;top:468px;width:1px;height:1px;background:#8c8c8c;"></div><div class="abs" style="left:150px;top:470.5px;width:1px;height:1px;background:#8c8c8c;"></div>
<div class="abs" style="left:240px;top:412px;width:95px;height:66px;background:#262626;"></div>
<div class="abs" style="left:240px;top:412px;width:15px;height:22px;background:#3a3a3a;color:#000;font-weight:bold;font-style:italic;font-size:13px;line-height:22px;text-align:center;">3</div>
<div class="abs" style="left:240px;top:436px;width:15px;height:15px;background:#3a3a3a;"></div>
<div class="abs" style="left:245px;top:443px;width:5px;height:1px;background:#000;"></div>
<div class="abs" style="left:255px;top:424px;width:80px;height:1px;background:#3a3a3a;"></div>
<div class="abs" style="left:240px;top:434px;width:95px;height:2px;background:#161616;"></div>
<div class="abs" style="left:255px;top:436px;width:80px;height:1px;background:#3a3a3a;"></div>
<div class="abs" style="left:277px;top:443.5px;font-size:14px;letter-spacing:-0.55px;line-height:16px;color:#9a9a9a;">Closed</div>
<div class="abs" style="left:315px;top:417px;width:3.5px;height:1px;background:#7a7a7a;"></div><div class="abs" style="left:320px;top:417px;width:3.5px;height:1px;background:#7a7a7a;"></div>
<div class="abs" style="left:315px;top:429px;width:3.5px;height:1px;background:#7a7a7a;"></div><div class="abs" style="left:320px;top:429px;width:3.5px;height:1px;background:#7a7a7a;"></div>
<div class="abs" style="left:315px;top:467px;width:3.5px;height:1px;background:#7a7a7a;"></div><div class="abs" style="left:320px;top:467px;width:3.5px;height:1px;background:#7a7a7a;"></div>
<div class="abs" style="left:242px;top:469px;width:3px;height:1px;background:#8c8c8c;"></div><div class="abs" style="left:250px;top:469px;width:3px;height:1px;background:#8c8c8c;"></div><div class="abs" style="left:247px;top:468px;width:1px;height:1px;background:#8c8c8c;"></div><div class="abs" style="left:247px;top:470.5px;width:1px;height:1px;background:#8c8c8c;"></div>
<div class="abs" style="left:337px;top:412px;width:95px;height:66px;background:#262626;"></div>
<div class="abs" style="left:337px;top:412px;width:15px;height:22px;background:#3a3a3a;color:#000;font-weight:bold;font-style:italic;font-size:13px;line-height:22px;text-align:center;">4</div>
<div class="abs" style="left:337px;top:436px;width:15px;height:15px;background:#3a3a3a;"></div>
<div class="abs" style="left:342px;top:443px;width:5px;height:1px;background:#000;"></div>
<div class="abs" style="left:352px;top:424px;width:80px;height:1px;background:#3a3a3a;"></div>
<div class="abs" style="left:337px;top:434px;width:95px;height:2px;background:#161616;"></div>
<div class="abs" style="left:352px;top:436px;width:80px;height:1px;background:#3a3a3a;"></div>
<div class="abs" style="left:374px;top:443.5px;font-size:14px;letter-spacing:-0.55px;line-height:16px;color:#9a9a9a;">Closed</div>
<div class="abs" style="left:412px;top:417px;width:3.5px;height:1px;background:#7a7a7a;"></div><div class="abs" style="left:417px;top:417px;width:3.5px;height:1px;background:#7a7a7a;"></div>
<div class="abs" style="left:412px;top:429px;width:3.5px;height:1px;background:#7a7a7a;"></div><div class="abs" style="left:417px;top:429px;width:3.5px;height:1px;background:#7a7a7a;"></div>
<div class="abs" style="left:412px;top:467px;width:3.5px;height:1px;background:#7a7a7a;"></div><div class="abs" style="left:417px;top:467px;width:3.5px;height:1px;background:#7a7a7a;"></div>
<div class="abs" style="left:339px;top:469px;width:3px;height:1px;background:#8c8c8c;"></div><div class="abs" style="left:347px;top:469px;width:3px;height:1px;background:#8c8c8c;"></div><div class="abs" style="left:344px;top:468px;width:1px;height:1px;background:#8c8c8c;"></div><div class="abs" style="left:344px;top:470.5px;width:1px;height:1px;background:#8c8c8c;"></div>
<div class="abs" style="left:537px;top:416px;width:79px;height:56px;background:#262626;"></div>
<div class="w x" style="left:540px;top:421.3px;">x1</div>
<div class="w x" style="right:186px;top:421.3px;">0.00000s</div>
<div class="w x" style="left:540px;top:434px;">x2</div>
<div class="w x" style="right:186px;top:434px;">0.00000s</div>
<div class="w x" style="left:540px;top:447.3px;"><svg class="tri" width="5.5" height="4" viewBox="0 0 5.5 4"><path d="M0.3,3.6 L2.75,0.6 L5.2,3.6 Z" fill="#7a7a7a" stroke="#a0a0a0" stroke-width="0.7"/></svg>x</div>
<div class="w x" style="right:186px;top:447.3px;">0.00000s</div>
<div class="w x" style="left:540px;top:459.5px;">1/<svg class="tri" width="5.5" height="4" viewBox="0 0 5.5 4"><path d="M0.3,3.6 L2.75,0.6 L5.2,3.6 Z" fill="#7a7a7a" stroke="#a0a0a0" stroke-width="0.7"/></svg>x</div>
<div class="w x" style="right:186px;top:459.5px;"></div>
<div class="abs" style="left:608.25px;top:463.8px;width:4.75px;height:1.3px;background:#9a9a9a;"></div><div class="abs" style="left:602.30px;top:463.8px;width:4.75px;height:1.3px;background:#9a9a9a;"></div><div class="abs" style="left:596.35px;top:463.8px;width:4.75px;height:1.3px;background:#9a9a9a;"></div><div class="abs" style="left:590.40px;top:463.8px;width:4.75px;height:1.3px;background:#9a9a9a;"></div>
<div class="abs" style="left:618px;top:416px;width:35px;height:56px;background:#262626;"></div>
<div class="abs" style="left:619px;top:418px;width:33px;height:25px;background:#000;color:#44e022;font-weight:bold;font-size:12.5px;line-height:25px;text-align:center;">Trig</div>
<div class="abs" style="left:618px;top:444px;width:35px;height:1px;background:#3a3a3a;"></div>
<div class="abs" style="left:618px;top:457px;width:35px;height:1px;background:#3a3a3a;"></div>
<div class="w" style="left:622.3px;top:447.8px;font-size:11.5px;">T</div>
<div class="w g" style="left:627.5px;top:460.5px;">Edge</div>
<div class="abs" style="left:654px;top:416px;width:42px;height:56px;background:#262626;"></div>
<div class="abs" style="left:657px;top:419px;width:16px;height:10px;background:#fafa00;color:#000;font-size:11px;line-height:10px;text-align:center;">1</div>
<div class="abs" style="left:676px;top:419px;width:16px;height:10px;background:#b0b0b0;border-radius:2px;"></div>
<div class="abs" style="left:678px;top:422px;width:12px;height:1px;background:#222;"></div>
<div class="abs" style="left:678px;top:425px;width:12px;height:1px;background:repeating-linear-gradient(90deg,#222 0 3px,transparent 3px 4px);"></div>
<div class="abs" style="left:654px;top:444px;width:42px;height:1px;background:#3a3a3a;"></div>
<div class="abs" style="left:654px;top:457px;width:42px;height:1px;background:#3a3a3a;"></div>
<div class="abs" style="left:698px;top:416px;width:99px;height:56px;background:#262626;"></div>
<div class="abs" style="left:700px;top:418px;width:52px;height:26px;background:#000;"></div>
<div class="abs" style="left:704px;top:421px;font-size:15.4px;line-height:18px;color:#fff;transform:scaleX(0.86);transform-origin:0 0;">10.0</div>
<div class="w" style="left:733.5px;top:420px;letter-spacing:0.2px;">ms/</div>
<div class="w" style="left:734.5px;top:429.5px;letter-spacing:0.2px;">div</div>
<div class="w" style="right:4px;top:420px;">Y&minus;T</div>
<div class="w" style="right:4px;top:431.5px;">0.00s</div>
<div class="w g" style="left:703px;top:445px;color:#b4b4b4;">140ms</div>
<div class="w g" style="right:4px;top:445px;">140Mpts</div>
<div class="w g" style="left:703px;top:459.5px;">Norm</div>
<div class="w g" style="right:4px;top:459.5px;">1.00GHz</div>
<div class="abs" style="left:698px;top:444px;width:99px;height:1px;background:#3a3a3a;"></div>
<div class="abs" style="left:698px;top:457px;width:99px;height:1px;background:#3a3a3a;"></div>
<div class="abs" style="left:753px;top:416px;width:1px;height:28px;background:#1a1a1a;"></div>
<svg width="800" height="480" viewBox="0 0 800 480">
<g fill="none" stroke="#b4b4b4" stroke-width="2.4" stroke-linejoin="miter">
<path d="M6.5,442.5 H15.5 L6.5,453.5 H17.5"/>
<path d="M21.8,437 L16.2,452.5"/>
<path d="M31,442.5 H23.5 L19.2,453.5 H27.5 L29.8,448.5 H24"/>
</g>
<circle cx="34.5" cy="434.3" r="4" fill="none" stroke="#d8d8d8" stroke-width="1"/>
<path d="M33.3,436.8 V432 H35 Q36.3,432 36.3,433.2 Q36.3,434.4 35,434.4 H33.3 M35,434.4 L36.3,436.8" fill="none" stroke="#d8d8d8" stroke-width="0.8"/>
</svg>
<svg width="800" height="480" viewBox="0 0 800 480">
<g opacity="0.92">
<circle cx="669.5" cy="452.5" r="17.3" fill="#dcdcdc"/>
<path d="M664,437 Q674,436 676.5,428.5 Q682,437 681,444 Z" fill="#dcdcdc"/>
</g>
<text x="662.5" y="441" font-size="10.5" fill="#f4f4f4" letter-spacing="0.55">Auto</text>
<text x="663" y="457" font-size="10.5" fill="#f4f4f4" letter-spacing="0.55">27.0V</text>
<g stroke="#3a3a3a" stroke-width="1.1" fill="none">
<circle cx="659.5" cy="453" r="2.1"/><circle cx="680.5" cy="453" r="2.1"/>
<path d="M661.2,451.6 L672,441.7 H682 M678.8,454.6 L667,465.7 H657"/>
</g>
<path d="M675.5,470 V464 M673,466.5 L675.5,463.5 L678,466.5 M675.5,462 H688" stroke="#b8c8e8" stroke-width="1" fill="none" opacity="0.8"/>
<g fill="none" stroke="#e6e6e6" stroke-width="2.5" opacity="0.9" stroke-linecap="round" stroke-linejoin="round">
<path d="M694.5,440.5 H702 V447.5 H694.5 Z M694.5,444 H702 M698,437.5 V449.5 Q698,451 700.5,451 H703.5 V449.5"/>
<path d="M709.5,440.5 H718 L714.5,443.5 V449 Q714.5,451 712,450 M708.5,445.5 H720"/>
<path d="M727,438 L725.5,442 H735.5 M730,437 Q729.5,446 723.5,451 M728.5,445.5 H734 Q731.5,449.5 726.5,451.5 M729.5,447 Q734,452.5 741,452.5 Q745,452.5 747,450.5 M733.5,437.5 L735,439"/>
<path d="M745,440 L745.5,443 M750.5,439.5 L749.5,442.5 M748,436 Q748,446 744.5,452.5 M748.5,447 L750.5,450.5 M753,439.5 H760 M755.5,436.5 L759,443 M752.5,443.5 L760,441.5 M751.5,446 H761 M754.5,446.5 Q754.5,451 751.5,453 M757.5,446.5 V451.5 Q757.5,453 761,452.5"/>
<path d="M764.5,441 H777 M769.5,437.5 Q769,446 764.5,451 M768.5,445.5 H774.5 Q772,449.5 767,451.5 M769.5,447 Q772.5,450 777.5,451"/>
</g>
<text x="693.5" y="466" font-size="10" font-weight="bold" fill="#cccccc" opacity="0.88" textLength="97.5" lengthAdjust="spacing">www.elecfans.com</text>
</svg>
</div></body></html>
